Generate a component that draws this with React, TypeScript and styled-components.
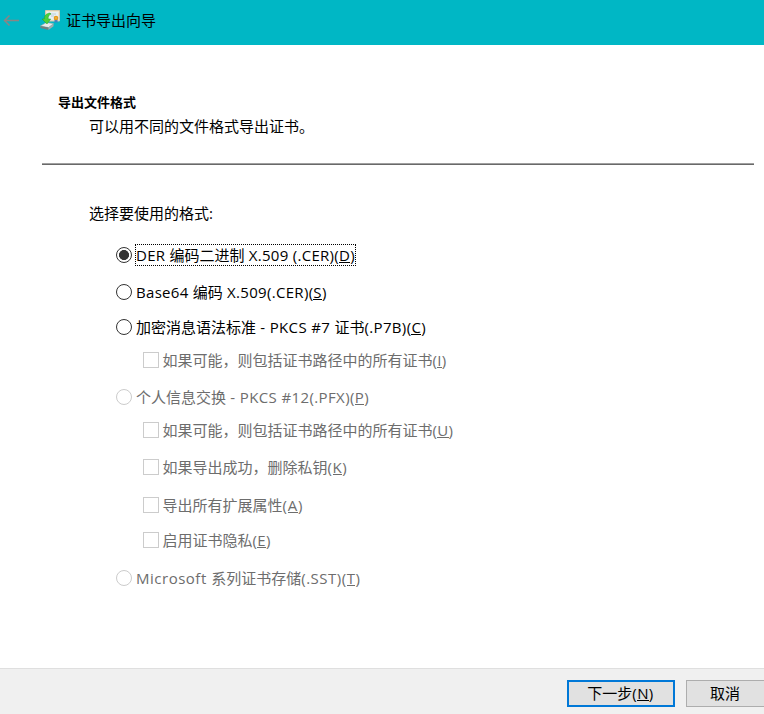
import React from 'react';
import styled, { createGlobalStyle, css } from 'styled-components';

const GlobalStyle = createGlobalStyle`
  * { box-sizing: border-box; }
  body {
    margin: 0;
    background: #fff;
    color: #000;
    font: 15px/20px "Open Sans", "Noto Sans CJK SC", sans-serif;
  }
`;

const Window = styled.div`
  display: flex;
  flex-direction: column;
  width: 764px;
  height: 714px;
  overflow: hidden;
  background: #fff;
`;

const TitleBar = styled.header`
  display: flex;
  align-items: center;
  flex: none;
  height: 45px;
  padding: 0 0 5px 3px;
  background: #00b7c5;
`;

const BackArrow = styled.svg`
  width: 17px;
  height: 13px;
  margin-right: 20px;
`;

const WizardIcon = styled.svg`
  width: 20px;
  height: 20px;
  margin: 0 6px 0 0;
`;

const Title = styled.span`
  line-height: 20px;
`;

const Heading = styled.div`
  padding: 47px 0 0 58px;
  flex: none;
  height: 118px;
`;

const HeadingTitle = styled.h1`
  margin: 0;
  font-size: 13px;
  line-height: 20px;
  font-weight: 700;
`;

const HeadingText = styled.p`
  margin: 4px 0 0 31px;
`;

const Divider = styled.div`
  flex: none;
  height: 2px;
  margin: 0 10px 0 42px;
  border-top: 1px solid #a0a0a0;
  border-bottom: 1px solid #696969;
`;

const Body = styled.main`
  flex: 1;
  padding: 38px 0 0 89px;
`;

const Prompt = styled.p`
  margin: 0;
`;

const Options = styled.div`
  padding: 22px 0 0 27px;
`;

const Option = styled.label<{ $gap: number; $nested?: boolean; $disabled?: boolean }>`
  display: flex;
  align-items: center;
  height: 20px;
  margin-top: ${(p) => p.$gap}px;
  margin-left: ${(p) => (p.$nested ? 27 : 0)}px;
  color: ${(p) => (p.$disabled ? '#6d6d6d' : '#000')};
`;

const Radio = styled.span<{ $disabled?: boolean; $checked?: boolean }>`
  width: 16px;
  height: 16px;
  flex: none;
  border: 1px solid ${(p) => (p.$disabled ? '#ccc' : '#333')};
  border-radius: 50%;
  background: ${(p) => (p.$checked ? 'radial-gradient(circle, #333 4.7px, #fff 5.3px)' : '#fff')};
`;

const Checkbox = styled.span`
  width: 16px;
  height: 16px;
  flex: none;
  border: 1px solid #ccc;
  background: #fff;
`;

const Caption = styled.span<{ $focused?: boolean; $nested?: boolean }>`
  margin-left: ${(p) => (p.$nested ? 3.5 : 4)}px;
  height: 20px;
  white-space: pre;
  ${(p) =>
    p.$focused &&
    css`
      outline: 1px dotted #000;
    `}
`;

const Latin = styled.span<{ $tracking: number }>`
  letter-spacing: ${(p) => p.$tracking}px;
`;

const AccessKey = styled.span`
  box-shadow: inset 0 -1px 0 currentColor;
  display: inline-block;
  height: 18px;
  line-height: 20px;
  vertical-align: top;
`;

const Footer = styled.footer`
  display: flex;
  flex: none;
  height: 46px;
  padding: 11px 0 0 567px;
  gap: 11px;
  border-top: 1px solid #dfdfdf;
  background: #f0f0f0;
`;

const Button = styled.button<{ $primary?: boolean }>`
  flex: none;
  width: 108px;
  height: 27px;
  margin: 0;
  padding: 0 ${(p) => (p.$primary ? 1 : 30)}px 2px 0;
  display: flex;
  align-items: center;
  justify-content: center;
  border: ${(p) => (p.$primary ? '2px solid #0078d7' : '1px solid #adadad')};
  background: #e1e1e1;
  color: #000;
  font: inherit;
`;

type Item = {
  text: string;
  accessKey: string;
  gap: number;
  tracking: number;
  nested?: boolean;
  disabled?: boolean;
  checked?: boolean;
};

const items: Item[] = [
  { text: 'DER 编码二进制 X.509 (.CER)', accessKey: 'D', gap: 0, tracking: 0.29, checked: true },
  { text: 'Base64 编码 X.509(.CER)', accessKey: 'S', gap: 17, tracking: 0.31 },
  { text: '加密消息语法标准 - PKCS #7 证书(.P7B)', accessKey: 'C', gap: 15, tracking: 0.35 },
  { text: '如果可能，则包括证书路径中的所有证书', accessKey: 'I', gap: 13, tracking: 0.3, nested: true, disabled: true },
  { text: '个人信息交换 - PKCS #12(.PFX)', accessKey: 'P', gap: 17, tracking: 0.38, disabled: true },
  { text: '如果可能，则包括证书路径中的所有证书', accessKey: 'U', gap: 13, tracking: 0.3, nested: true, disabled: true },
  { text: '如果导出成功，删除私钥', accessKey: 'K', gap: 17, tracking: 0.6, nested: true, disabled: true },
  { text: '导出所有扩展属性', accessKey: 'A', gap: 18, tracking: 0.8, nested: true, disabled: true },
  { text: '启用证书隐私', accessKey: 'E', gap: 15, tracking: 0.3, nested: true, disabled: true },
  { text: 'Microsoft 系列证书存储(.SST)', accessKey: 'T', gap: 18, tracking: 0.51, disabled: true },
];

type MixedTextProps = { text: string; accessKey: string; tracking?: number };

function MixedText({ text, accessKey, tracking = 0 }: MixedTextProps) {
  const parts = text.match(/[\x20-\x7e]+|[^\x20-\x7e]+/g) ?? [];
  return (
    <>
      {parts.map((part, i) =>
        /^[\x20-\x7e]/.test(part) ? (
          <Latin key={i} $tracking={tracking}>{part}</Latin>
        ) : (
          <React.Fragment key={i}>{part}</React.Fragment>
        ),
      )}
      <Latin $tracking={tracking}>
        (<AccessKey>{accessKey}</AccessKey>)
      </Latin>
    </>
  );
}

export default function App() {
  return (
    <>
      <GlobalStyle />
      <Window>
        <TitleBar>
          <BackArrow viewBox="0 0 17 13" fill="none" stroke="#8a8584" strokeWidth="1.5">
            <path d="M16 6.5H1.5M6.5 1.5l-5 5 5 5" />
          </BackArrow>
          <WizardIcon viewBox="0 0 20 20">
            <path d="M5.5.5h14v10.5h-14z" fill="#eee6d2" stroke="#d4c7ad" />
            <path d="M7 2h11v7.5H7z" fill="#e6f0f6" />
            <path d="M10 4h6M11 6h3" stroke="#b3c5cf" strokeWidth=".8" />
            <path d="M14.5 9v4l1.5-1 1.5 1V9z" fill="#3f7fc4" />
            <circle cx="16" cy="8" r="2.3" fill="#e69a1c" />
            <circle cx="16" cy="8" r=".8" fill="#f6c65b" />
            <path d="M.5 16l6-3.5 7 1.2-5 3.8z" fill="#e9ecec" stroke="#a4adad" strokeWidth=".6" />
            <path d="M.5 16l8 1.5V20l-8-2z" fill="#718080" />
            <path d="M8.5 17.5l5-3.8v2.5l-5 3.8z" fill="#a2acac" />
            <path d="M10 3C6 3.5 4 6 4.3 9H2l5 5 3.7-5H8.2c-.2-2.5.5-4 2.8-5z" fill="#4bd03a" stroke="#279c2d" strokeWidth=".5" />
          </WizardIcon>
          <Title>证书导出向导</Title>
        </TitleBar>
        <Heading>
          <HeadingTitle>导出文件格式</HeadingTitle>
          <HeadingText>可以用不同的文件格式导出证书。</HeadingText>
        </Heading>
        <Divider />
        <Body>
          <Prompt>选择要使用的格式:</Prompt>
          <Options>
            {items.map((item) => (
              <Option key={item.accessKey} $gap={item.gap} $nested={item.nested} $disabled={item.disabled}>
                {item.nested ? <Checkbox /> : <Radio $disabled={item.disabled} $checked={item.checked} />}
                <Caption $focused={item.checked} $nested={item.nested}>
                  <MixedText text={item.text} accessKey={item.accessKey} tracking={item.tracking} />
                </Caption>
              </Option>
            ))}
          </Options>
        </Body>
        <Footer>
          <Button $primary>
            <span><MixedText text="下一步" accessKey="N" tracking={0.4} /></span>
          </Button>
          <Button>取消</Button>
        </Footer>
      </Window>
    </>
  );
}
